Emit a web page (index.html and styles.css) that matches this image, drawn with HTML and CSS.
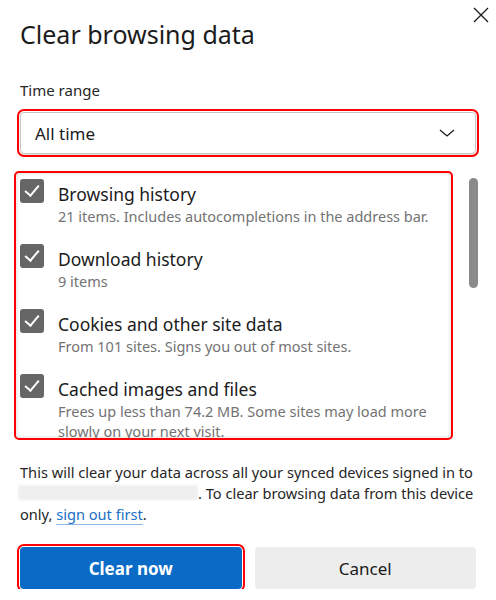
FILE: index.html
```html
<!DOCTYPE html>
<html lang="en">
<head>
  <meta charset="UTF-8" />
  <meta name="viewport" content="width=device-width, initial-scale=1.0"/>
  <title>Clear browsing data</title>
  <link rel="stylesheet" href="styles.css">
</head>
<body>

  <div class="dialog">
    <div class="dialog-head">
      <h1>Clear browsing data</h1>
      <button class="close" aria-label="Close">
        <svg width="16" height="16" viewBox="0 0 16 16">
          <path d="M1 1 L15 15 M15 1 L1 15" stroke="#1b1b1b" stroke-width="1.3" fill="none"/>
        </svg>
      </button>
    </div>

    <label class="field-label">Time range</label>
    <div class="select marked">
      <span>All time</span>
      <svg width="16" height="8" viewBox="0 0 16 8">
        <path d="M1 1 L8 7 L15 1" stroke="#1b1b1b" stroke-width="1.3" fill="none"/>
      </svg>
    </div>

    <div class="scroll-area">
      <ul class="options marked-box">
        <li>
          <span class="check"></span>
          <div>
            <div class="opt-title">Browsing history</div>
            <div class="opt-desc">21 items. Includes autocompletions in the address bar.</div>
          </div>
        </li>
        <li>
          <span class="check"></span>
          <div>
            <div class="opt-title">Download history</div>
            <div class="opt-desc">9 items</div>
          </div>
        </li>
        <li>
          <span class="check"></span>
          <div>
            <div class="opt-title">Cookies and other site data</div>
            <div class="opt-desc">From 101 sites. Signs you out of most sites.</div>
          </div>
        </li>
        <li>
          <span class="check"></span>
          <div>
            <div class="opt-title">Cached images and files</div>
            <div class="opt-desc">Frees up less than 74.2 MB. Some sites may load more slowly on your next visit.</div>
          </div>
        </li>
      </ul>
      <div class="scrollbar"><div class="thumb"></div></div>
    </div>

    <p class="note">This will clear your data across all your synced devices signed in to <span class="blurred"></span>. To clear browsing data from this device only, <a href="#">sign out first</a>.</p>

    <div class="actions">
      <button class="btn primary marked">Clear now</button>
      <button class="btn">Cancel</button>
    </div>
  </div>

</body>
</html>
```

FILE: styles.css
```css
body {
  margin: 0;
  background-color: #fff;
  color: #1b1b1b;
  font-family: "Noto Sans", "Open Sans", sans-serif;
}

.dialog {
  padding: 0 20px;
}

.dialog-head {
  display: flex;
  justify-content: space-between;
  align-items: flex-start;
}

h1 {
  margin: 0;
  padding-top: 17px;
  font-size: 25px;
  font-weight: normal;
  line-height: 34px;
}

.close {
  margin: 7px -13px 0 0;
  padding: 0;
  border: none;
  background: none;
  width: 16px;
  height: 16px;
}

.field-label {
  display: block;
  margin-top: 29px;
  font-size: 15px;
  line-height: 20px;
  color: #262626;
}

.marked {
  outline: 2px solid #f00;
  outline-offset: 1px;
}

.select {
  display: flex;
  justify-content: space-between;
  align-items: center;
  margin-top: 12px;
  height: 40px;
  padding: 0 20px 0 14px;
  border: 1px solid #c4c4c4;
  border-radius: 4px;
  box-shadow: 0 1px 2px rgba(0, 0, 0, 0.15);
  font-size: 17px;
}

.scroll-area {
  display: flex;
  justify-content: space-between;
  margin: 17px 0 0 -6px;
  height: 269px;
}

.options {
  list-style-type: none;
  margin: 0;
  padding: 6px 0 0 4px;
  width: 439px;
  box-sizing: border-box;
  overflow: hidden;
}

.marked-box {
  border: 2px solid #f00;
  border-radius: 5px;
  box-shadow: inset 0 0 4px rgba(0, 0, 0, 0.18);
}

.options li {
  display: flex;
  gap: 14px;
  margin-bottom: 18px;
}

.check {
  flex: none;
  position: relative;
  width: 24px;
  height: 24px;
  border-radius: 3px;
  background-color: #666;
}

.check::after {
  content: "";
  position: absolute;
  left: 8px;
  top: 3px;
  width: 6px;
  height: 12px;
  border: solid #fff;
  border-width: 0 2.5px 2.5px 0;
  transform: rotate(40deg);
}

.opt-title {
  margin-top: 3px;
  font-size: 17.5px;
  line-height: 24px;
}

.opt-desc {
  font-size: 14.5px;
  line-height: 20px;
  color: #737373;
}

.scrollbar {
  width: 9px;
  margin-right: -2px;
  padding-top: 7px;
}

.thumb {
  height: 110px;
  border-radius: 5px;
  background-color: #8a8a8a;
}

.note {
  margin: 22px 0 0;
  font-size: 14.6px;
  line-height: 21px;
  color: #262626;
}

.blurred {
  display: inline-block;
  width: 180px;
  height: 15px;
  margin-left: -2px;
  vertical-align: -1px;
  border-radius: 3px;
  background-color: #efefef;
  filter: blur(1px);
}

.note a {
  color: #1a6fc4;
  text-decoration: underline;
  text-decoration-color: #8ab8e6;
  text-underline-offset: 4px;
}

.actions {
  display: flex;
  gap: 13px;
  margin-top: 22px;
}

.btn {
  flex: 1;
  height: 42px;
  border: none;
  border-radius: 4px;
  background-color: #ededed;
  color: #1b1b1b;
  font-family: inherit;
  font-size: 17px;
}

.btn.primary {
  background-color: #0a6bc7;
  color: #fff;
  font-weight: bold;
}
```
